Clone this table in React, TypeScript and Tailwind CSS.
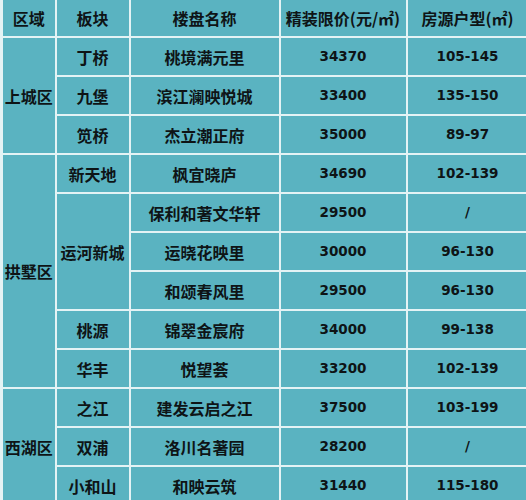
const rows: { area?: [string, number]; block?: [string, number]; name: string; price: string; size: string }[] = [
  { area: ["上城区", 3], block: ["丁桥", 1], name: "桃境满元里", price: "34370", size: "105-145" },
  { block: ["九堡", 1], name: "滨江澜映悦城", price: "33400", size: "135-150" },
  { block: ["笕桥", 1], name: "杰立潮正府", price: "35000", size: "89-97" },
  { area: ["拱墅区", 6], block: ["新天地", 1], name: "枫宜晓庐", price: "34690", size: "102-139" },
  { block: ["运河新城", 3], name: "保利和著文华轩", price: "29500", size: "/" },
  { name: "运晓花映里", price: "30000", size: "96-130" },
  { name: "和颂春风里", price: "29500", size: "96-130" },
  { block: ["桃源", 1], name: "锦翠金宸府", price: "34000", size: "99-138" },
  { block: ["华丰", 1], name: "悦望荟", price: "33200", size: "102-139" },
  { area: ["西湖区", 3], block: ["之江", 1], name: "建发云启之江", price: "37500", size: "103-199" },
  { block: ["双浦", 1], name: "洛川名著园", price: "28200", size: "/" },
  { block: ["小和山", 1], name: "和映云筑", price: "31440", size: "115-180" },
];

const cjk = "font-['Noto_Sans_CJK_SC',sans-serif] text-[16px] font-bold";
const num = "font-['DejaVu_Sans',sans-serif] text-[13.5px] font-bold";
const cell = "border-2 border-[#e4f3f5] text-center align-middle p-0 text-[#0e1416]";

export default function App() {
  return (
    <div className="w-full h-screen overflow-hidden bg-[#5ab3c1]">
      <table className="w-[526px] table-fixed border-collapse">
        <colgroup>
          <col className="w-[54px]" />
          <col className="w-[74px]" />
          <col className="w-[150px]" />
          <col className="w-[127px]" />
          <col className="w-[121px]" />
        </colgroup>
        <thead>
          <tr className="h-[37px]">
            <th className={`${cell} ${cjk} border-t-0 border-l-[3px]`}>区域</th>
            <th className={`${cell} ${cjk} border-t-0`}>板块</th>
            <th className={`${cell} ${cjk} border-t-0`}>楼盘名称</th>
            <th className={`${cell} ${cjk} border-t-0 whitespace-nowrap`}>精装限价(元/㎡)</th>
            <th className={`${cell} ${cjk} border-t-0 border-r-0 whitespace-nowrap`}>房源户型(㎡)</th>
          </tr>
        </thead>
        <tbody>
          {rows.map((r) => (
            <tr key={r.name} className="h-[39px]">
              {r.area && (
                <td rowSpan={r.area[1]} className={`${cell} ${cjk} border-l-[3px] whitespace-nowrap`}>
                  {r.area[0]}
                </td>
              )}
              {r.block && (
                <td rowSpan={r.block[1]} className={`${cell} ${cjk} whitespace-nowrap`}>
                  {r.block[0]}
                </td>
              )}
              <td className={`${cell} ${cjk} whitespace-nowrap`}>{r.name}</td>
              <td className={`${cell} ${num}`}>{r.price}</td>
              <td className={`${cell} ${num} border-r-0`}>{r.size}</td>
            </tr>
          ))}
        </tbody>
      </table>
    </div>
  );
}
